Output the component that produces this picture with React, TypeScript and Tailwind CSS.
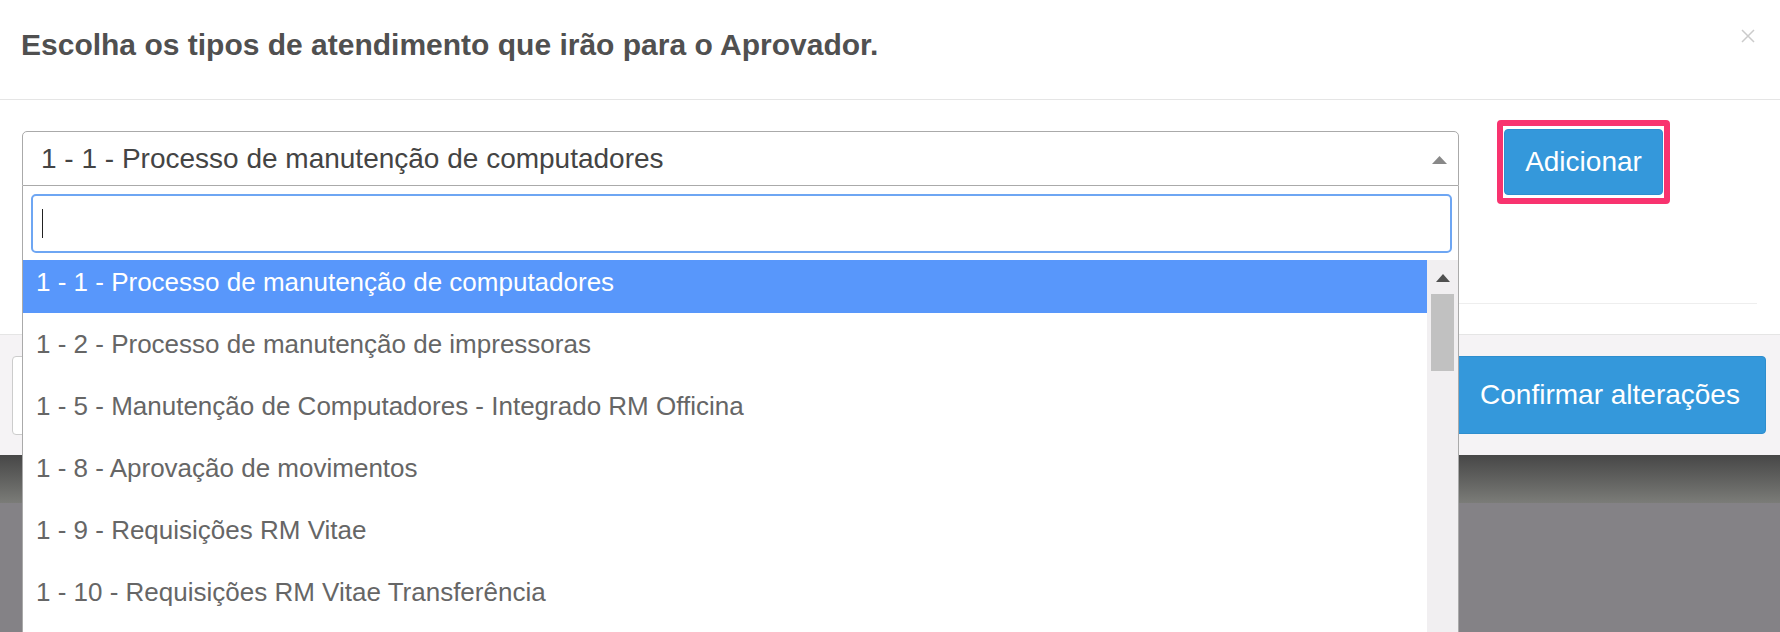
const options = [
  '1 - 1 - Processo de manutenção de computadores',
  '1 - 2 - Processo de manutenção de impressoras',
  '1 - 5 - Manutenção de Computadores - Integrado RM Officina',
  '1 - 8 - Aprovação de movimentos',
  '1 - 9 - Requisições RM Vitae',
  '1 - 10 - Requisições RM Vitae Transferência',
];

function SelectBox() {
  return (
    <div className="relative mt-[11px] w-[1437px]">
      <div className="flex h-[55px] items-center justify-between rounded-t-[5px] border border-[#aaa] bg-white pl-[18px] pr-[11px]">
        <span className="text-[28px] leading-[34px] text-[#444]">1 - 1 - Processo de manutenção de computadores</span>
        <svg width="15" height="8" viewBox="0 0 15 8" className="mt-[3px]">
          <path d="M0 8 L7.5 0 L15 8 Z" fill="#888" />
        </svg>
      </div>

      {/* dropdown aberto */}
      <div className="absolute left-0 top-full z-10 flex h-[460px] w-full flex-col border-x border-[#aaa] bg-white">
        <div className="pb-[7px] pl-[8px] pr-[6px] pt-[8px]">
          <div className="flex h-[59px] items-center rounded-[5px] border-2 border-[#6ea6f3] pl-[9px]">
            <div className="h-[29px] w-[1px] bg-[#222]" />
          </div>
        </div>
        <div className="flex flex-1 overflow-hidden">
          <div className="flex-1 overflow-hidden">
            <ul className="-mt-[9px]">
              {options.map((opt, i) => (
                <li
                  key={opt}
                  className={
                    i === 0
                      ? 'h-[62px] bg-[#5897fb] pl-[13px] text-[26px] leading-[62px] text-white'
                      : 'h-[62px] pl-[13px] text-[26px] leading-[62px] text-[#666]'
                  }
                >
                  {opt}
                </li>
              ))}
            </ul>
          </div>
          <div className="flex w-[31px] flex-col items-center bg-[#f1eff1]">
            <svg width="14" height="8" viewBox="0 0 14 8" className="mt-[14px]">
              <path d="M0 8 L7 0 L14 8 Z" fill="#505050" />
            </svg>
            <div className="mt-[12px] h-[77px] w-[23px] bg-[#c1c1c1]" />
          </div>
        </div>
      </div>
    </div>
  );
}

export default function App() {
  return (
    <div className="relative flex h-[632px] w-[1780px] flex-col overflow-hidden bg-[#848286] font-['Liberation_Sans',Arial,sans-serif]">
      <div className="bg-white">
        {/* cabeçalho */}
        <div className="flex h-[100px] items-start justify-between border-b border-[#e5e5e5] pl-[21px] pr-[25px] pt-[28px]">
          <h4 className="text-[30px] font-bold leading-[33px] text-[#505050]">
            Escolha os tipos de atendimento que irão para o Aprovador.
          </h4>
          <button className="mt-[1px]">
            <svg width="14" height="14" viewBox="0 0 14 14">
              <path d="M1 1 L13 13 M13 1 L1 13" stroke="#cbcbcb" strokeWidth="1.5" />
            </svg>
          </button>
        </div>

        {/* corpo */}
        <div className="pb-[30px] pl-[22px] pr-[23px] pt-[20px]">
          <div className="flex items-start">
            <SelectBox />
            <div className="ml-[38px] rounded-[4px] border-[6px] border-[#f8336f] bg-white px-[1px] py-[3px]">
              <button className="h-[66px] w-[159px] rounded-[4px] border border-[#2e8ece] bg-[#3498db] text-[28px] text-white">
                Adicionar
              </button>
            </div>
          </div>
          <hr className="mt-[99px] border-t border-[#eee]" />
        </div>

        {/* rodapé: o botão de cancelar fica por baixo do dropdown */}
        <div className="flex h-[121px] items-center justify-between border-t border-[#e5e5e5] bg-[#f5f3f5] pl-[12px] pr-[14px]">
          <button aria-label="Cancelar" className="h-[79px] w-[200px] rounded-[4px] border border-[#ccc] bg-white" />
          <button className="h-[78px] w-[312px] rounded-[4px] border border-[#2e8ece] bg-[#3498db] text-[28px] text-white">
            Confirmar alterações
          </button>
        </div>
      </div>
      <div className="h-[48px] bg-gradient-to-b from-[#474747] to-[#7b7c78]" />
    </div>
  );
}
